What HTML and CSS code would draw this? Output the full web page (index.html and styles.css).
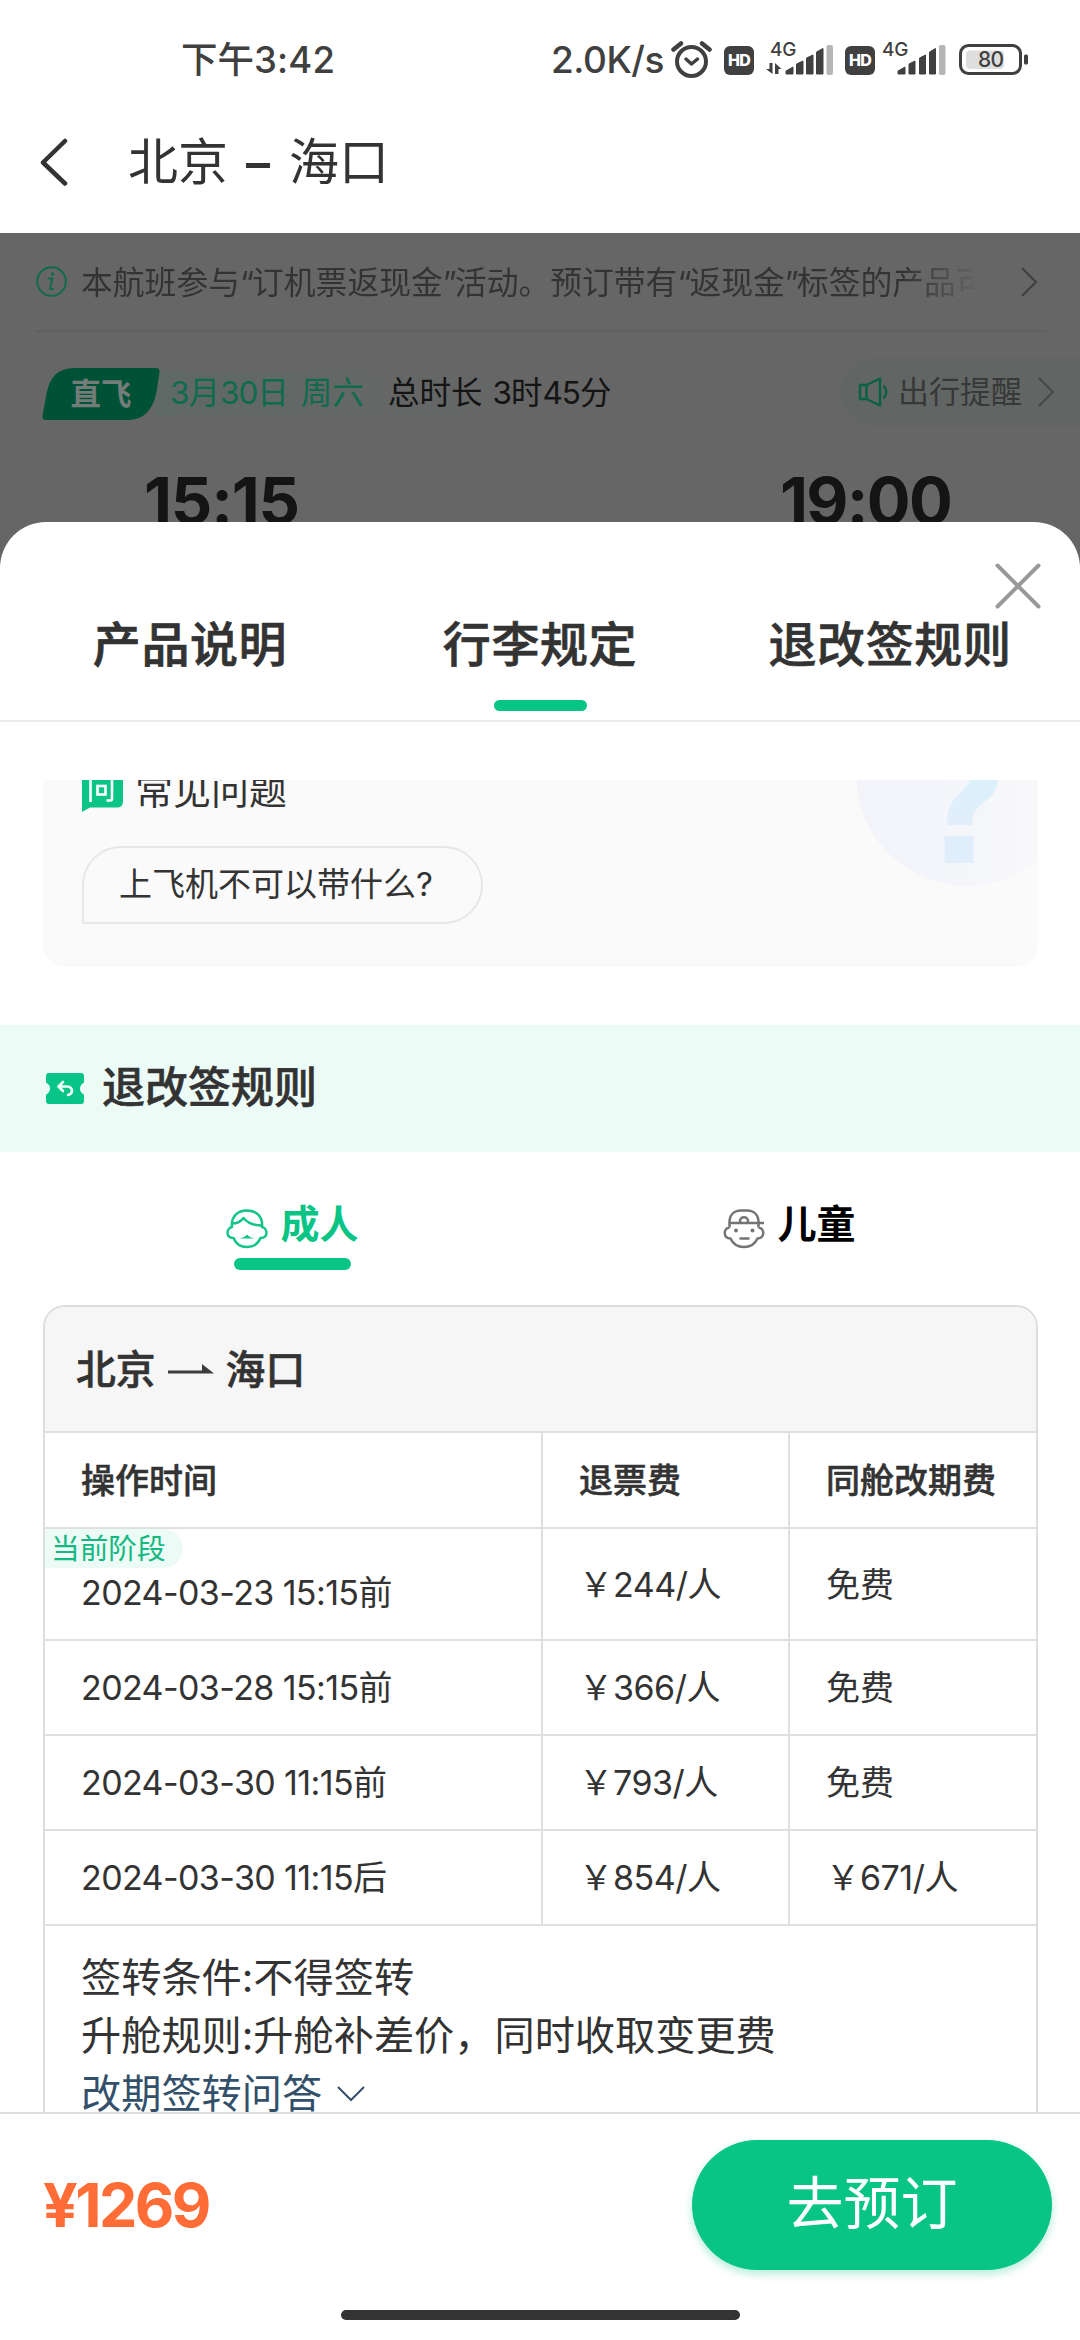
FILE: index.html
```html
<!DOCTYPE html>
<html lang="zh-CN">
<head>
<meta charset="utf-8">
<title>北京 - 海口</title>
<link rel="stylesheet" href="styles.css">
</head>
<body>
<div class="page">
  <header class="top">
    <div class="status">
      <span class="clock">下午<span class="clock-num">3:42</span></span>
      <div class="status-right">
        <span class="speed">2.0K/s</span>
        <svg class="alarm" width="41" height="38" viewBox="0 0 41 38" fill="none" stroke="#404040" stroke-linecap="round">
          <circle cx="20.500" cy="21.500" r="14.500" stroke-width="4"/>
          <path d="M2.500 9.500 10 3.500M38.500 9.500 31 3.500" stroke-width="4.500"/>
          <path d="M15 19l5.500 5 6-5" stroke-width="3.500" stroke-linejoin="round"/>
        </svg>
        <span class="hd hd-1">HD</span>
        <svg class="signal-1" width="68" height="40" viewBox="0 0 68 40">
          <text x="4" y="18" class="net">4G</text>
          <g fill="#404040">
            <path d="M0 31h3.500v-6h3v11zM9 36V25l6.500 6h-3v5z"/>
            <path d="M20 36v-3l7-4v7zM30.500 36V26l6.500-3v13zM40.500 36V20l6.500-3v19zM50.500 36V14l6.500-3.500V36z" stroke="#404040" stroke-width="1" stroke-linejoin="round"/>
          </g>
          <rect x="60.500" y="7" width="6.500" height="30" rx="2" fill="#b5b5b5"/>
        </svg>
        <span class="hd hd-2">HD</span>
        <svg class="signal-2" width="65" height="40" viewBox="0 0 65 40">
          <text x="0" y="18" class="net">4G</text>
          <path d="M16 36v-3l7-4v7zM27 36V26l6-3v13zM37.500 36V20l6-3v19zM47.500 36V14l6-3.500V36z" fill="#404040" stroke="#404040" stroke-linejoin="round"/>
          <rect x="57" y="7" width="6.500" height="30" rx="2" fill="#b5b5b5"/>
        </svg>
        <svg class="battery" width="70" height="31" viewBox="0 0 70 31">
          <rect x="1.500" y="1.500" width="60" height="28" rx="8" fill="none" stroke="#404040" stroke-width="3"/>
          <rect x="7" y="6.500" width="38" height="18.500" rx="4" fill="#dedede"/>
          <rect x="65" y="10.500" width="4" height="10" rx="1.500" fill="#404040"/>
          <text x="19" y="23" class="level">80</text>
        </svg>
      </div>
    </div>
    <nav class="nav">
      <svg class="back" width="28" height="48" viewBox="0 0 28 48" fill="none" stroke="#333" stroke-width="4.500" stroke-linecap="round" stroke-linejoin="round"><path d="M25 3 3 24.500 25 45.500"/></svg>
      <h1 class="title">北京<i class="dash"></i>海口</h1>
    </nav>
  </header>

  <section class="flight">
    <div class="notice">
      <svg width="31" height="31" viewBox="0 0 31 31"><circle cx="15.500" cy="15.500" r="14.300" fill="none" stroke="#0f6b4d" stroke-width="2"/><circle cx="16.500" cy="8" r="1.800" fill="#0f6b4d"/><path d="M12 12.500h4.500l-2.500 10.500h4" fill="none" stroke="#0f6b4d" stroke-width="2" stroke-linejoin="round"/></svg>
      <p class="notice-text">本航班参与<q>“</q>订机票返现金<q>”</q>活动。预订带有<q>“</q>返现金<q>”</q>标签的产品可</p>
      <svg class="more" width="17" height="30" viewBox="0 0 17 30" fill="none" stroke="#3f3f3f" stroke-width="2"><path d="M1 1l14 14L1 29"/></svg>
    </div>
    <div class="trip">
      <div class="direct">
        <svg class="direct-shape" width="118" height="52" viewBox="0 0 118 52"><path d="M32 0h82q4 0 3.500 4l-3 20Q109 52 86 52H4q-4 0-3.500-4l4-22Q9 0 32 0z" fill="#005236"/></svg>
        <span class="direct-text">直飞</span>
      </div>
      <div class="date"><span class="num-trip">3</span>月<span class="num-trip">30</span>日<span class="gap"></span>周六</div>
      <div class="duration">总时长<span class="gap-d"></span><span class="num-trip">3</span>时<span class="num-trip">45</span>分</div>
      <div class="remind">
        <svg width="31" height="30" viewBox="0 0 31 30" fill="none" stroke="#0a6043" stroke-width="2.400" stroke-linejoin="round" stroke-linecap="round"><path d="M2 8h6.500v14H2zM8.500 8 22 1.500v27L8.500 22M26 9.500q4.500 5.500 0 11"/></svg>
        <span>出行提醒</span>
        <svg width="17" height="30" viewBox="0 0 17 30" fill="none" stroke="#474747" stroke-width="2"><path d="M1 1l14 14L1 29"/></svg>
      </div>
    </div>
    <div class="times"><span class="depart">15:15</span><span class="arrive">19:00</span></div>
  </section>

  <main class="sheet">
    <div class="tabs">
      <div class="tab">产品说明</div>
      <div class="tab active">行李规定</div>
      <div class="tab">退改签规则</div>
      <svg class="close" width="46" height="46" viewBox="0 0 46 46" stroke="#999" stroke-width="4" stroke-linecap="round"><path d="M2.500 2.500l41 41M43.500 2.500l-41 41"/></svg>
    </div>

    <div class="content">
      <section class="faq">
        <svg class="faq-art" width="181" height="110" viewBox="0 0 181 110">
          <defs>
            <linearGradient id="disc" x1="0" x2="1" y1="0" y2="0"><stop offset="0" stop-color="#f3f4fa"/><stop offset=".55" stop-color="#f5f6fa"/><stop offset="1" stop-color="#fafafa"/></linearGradient>
            <linearGradient id="mark" x1="1" x2="0" y1="0" y2="1"><stop offset="0" stop-color="#daf1fb"/><stop offset="1" stop-color="#e3eefb"/></linearGradient>
          </defs>
          <circle cx="110" cy="-5" r="111" fill="url(#disc)"/>
          <path d="M113 0h28q-2 13-10 19c-10 8-16 12-16 26H90c0-18 5-24 12-31q8-7 11-14z" fill="url(#mark)"/>
          <rect x="87.500" y="56" width="29" height="27" fill="#e0eefb"/>
        </svg>
        <div class="faq-head">
          <svg class="faq-icon" width="41" height="46" viewBox="0 0 41 46">
            <path d="M6 0h29q6 0 6 6v29.500q0 6-6 6H8L0 46V6q0-6 6-6z" fill="#0dc487"/>
            <path d="M8.500 12v24M9 6l4 4M16 8h14v24.500q0 2-2 2h-3.500" fill="none" stroke="#fff" stroke-width="2.600"/>
            <rect x="15.500" y="20" width="8" height="8.500" fill="none" stroke="#fff" stroke-width="2.600"/>
          </svg>
          <h2>常见问题</h2>
        </div>
        <div class="bubble">上飞机不可以带什么?</div>
      </section>

      <section class="band">
        <svg width="38" height="31" viewBox="0 0 38 31">
          <path d="M3 0h32q3 0 3 3v6.500q-4 2-4 6t4 6V28q0 3-3 3H3q-3 0-3-3v-6.500q4-2 4-6t-4-6V3q0-3 3-3z" fill="#08c486"/>
          <path d="M17 9l-4.500 4.500L17 18M13 13.500h8q5 .500 5 4.500 0 3-4 4" fill="none" stroke="#edfff9" stroke-width="2.600" stroke-linecap="round" stroke-linejoin="round"/>
        </svg>
        <h2>退改签规则</h2>
      </section>

      <div class="ages">
        <div class="age adult">
          <svg width="42" height="40" viewBox="0 0 42 40" fill="none" stroke="#12c489" stroke-width="2.500" stroke-linejoin="round">
            <path d="M6 18C5 7 12 1.500 21 1.500S37 7 36 18c6 1.500 6.500 11-1.500 11C32 35 27 38 21 38S10 35 7.500 29C-.500 29 0 19.500 6 18z"/>
            <path d="M6 14.500c6 0 9-2 11.500-5.500 4 5 10 7.500 18.500 7.500"/>
            <path d="M13 29.500q5-.500 8-4 3 3.500 8 4z" fill="#12c489" stroke="none"/>
          </svg>
          <span>成人</span>
        </div>
        <div class="age child">
          <svg width="42" height="40" viewBox="0 0 42 40" fill="none" stroke="#747474" stroke-width="2.500" stroke-linejoin="round">
            <path d="M6.500 18.500C0 19.500 0 29 7.500 29.500 10 35 15 38 21 38s11-3 13.500-8.500C42 29 42 19.500 35.500 18.500M6.500 18.500V12C7 5 12 1.500 18 1.500h6C30 1.500 35 5 35.500 12v6.500M6 14h35M17 14v-2c0-5 8-5 8 0v2M16.500 29.500h10"/>
            <circle cx="13" cy="21.500" r="2" fill="#747474" stroke="none"/><circle cx="29.500" cy="21.500" r="2" fill="#747474" stroke="none"/>
          </svg>
          <span>儿童</span>
        </div>
      </div>

      <section class="rules">
        <div class="route">北京
          <svg width="46" height="11" viewBox="0 0 46 11"><path d="M0 6.500h34V0l12 9.500H0z" fill="#3c3c3c"/></svg>
          海口</div>
        <div class="row head"><div>操作时间</div><div>退票费</div><div>同舱改期费</div></div>
        <div class="row current">
          <div><em class="stage">当前阶段</em><span class="n">2024-03-23 15:15</span>前</div>
          <div>￥<span class="n">244/</span>人</div><div>免费</div>
        </div>
        <div class="row"><div><span class="n">2024-03-28 15:15</span>前</div><div>￥<span class="n">366/</span>人</div><div>免费</div></div>
        <div class="row"><div><span class="n">2024-03-30 11:15</span>前</div><div>￥<span class="n">793/</span>人</div><div>免费</div></div>
        <div class="row"><div><span class="n">2024-03-30 11:15</span>后</div><div>￥<span class="n">854/</span>人</div><div>￥<span class="n">671/</span>人</div></div>
        <div class="notes">
          <p>签转条件:不得签转</p>
          <p>升舱规则:升舱补差价，同时收取变更费</p>
          <p class="link">改期签转问答
            <svg width="30" height="18" viewBox="0 0 30 18" fill="none" stroke="#33506b" stroke-width="2"><path d="M2 2l13 13L28 2"/></svg></p>
        </div>
      </section>
    </div>
  </main>

  <footer class="bar">
    <div class="buy">
      <span class="price">¥1269</span>
      <div class="book">去预订</div>
    </div>
    <i class="home"></i>
  </footer>
</div>
</body>
</html>
```
FILE: styles.css
```css
* { box-sizing: border-box; margin: 0; padding: 0; }
body { background: #fff; font-family: Inter, "Noto Sans CJK SC", sans-serif; color: #333; }
i, em { font-style: normal; }
q { quotes: none; letter-spacing: -2px; }
svg { display: block; flex: none; }
.page { width: 1080px; height: 2340px; display: flex; flex-direction: column; overflow: hidden; }

/* status bar and navigation */
.top { height: 233px; flex: none; background: #fff; }
.status { height: 120px; display: flex; justify-content: space-between; align-items: center; padding: 0 52px 0 181px; color: #404040; }
.clock { font-size: 36.500px; line-height: 44px; font-weight: 500; white-space: nowrap; padding-bottom: 1px; }
.clock-num { letter-spacing: 0.200px; }
.status-right { display: flex; align-items: center; width: 477px; height: 40px; }
.speed { width: 120px; font-size: 37px; line-height: 44px; font-weight: 500; letter-spacing: -0.500px; white-space: nowrap; flex: none; padding-bottom: 1px; }
.alarm { margin-top: -3px; margin-left: 0; }
.hd { width: 30px; height: 29px; border-radius: 6px; background: #404040; color: #fff; font: 800 16px/29px Inter, sans-serif; text-align: center; flex: none; letter-spacing: -0.8px; }
.hd-1 { margin-left: 12px; }
.signal-1 { margin-left: 12px; margin-top: -4px; }
.hd-2 { margin-left: 11px; }
.signal-2 { margin-left: 7px; margin-top: -4px; }
.battery { margin-left: 12px; margin-top: -2px; }
.net { font: 500 19px Inter, sans-serif; fill: #404040; letter-spacing: -0.3px; }
.level { font: 500 21px Inter, sans-serif; fill: #404040; letter-spacing: -0.8px; }
.nav { height: 84px; display: flex; align-items: center; padding-left: 40px; }
.title { margin-left: 60px; font-size: 50px; line-height: 86px; font-weight: 400; display: flex; align-items: center; }
.dash { width: 24px; height: 5px; background: #333; margin: 7px 19px 0 18px; }

/* dimmed flight summary */
.flight { height: 340px; flex: none; background: #666; overflow: hidden; }
.notice { display: flex; align-items: center; height: 99px; margin: 0 34px 0 36px; border-bottom: 2px solid #606060; }
.notice-text { margin-left: 14px; width: 892px; padding-top: 2px; font-size: 31.800px; line-height: 60px; white-space: nowrap; overflow: hidden; color: transparent; background: linear-gradient(90deg, #333 92%, #666 101%); background-clip: text; -webkit-background-clip: text; }
.more { margin-left: 48px; }
.trip { height: 123px; display: flex; align-items: center; padding-left: 42px; font-size: 31.500px; line-height: 44px; white-space: nowrap; }
.direct { display: grid; width: 118px; height: 52px; place-items: center; flex: none; z-index: 1; }
.direct-shape, .direct-text { grid-area: 1 / 1; }
.direct-text { font-weight: 700; font-size: 30.500px; color: #727c78; }
.date { height: 46px; margin-left: -6px; padding-left: 16px; width: 230px; color: #0f6b4d; background: linear-gradient(90deg, #5f6965, #646766); }
.num-trip { letter-spacing: -1px; }
.gap { display: inline-block; width: 12px; }
.gap-d { display: inline-block; width: 10px; }
.duration { color: #141414; height: 46px; margin-left: 4px; width: 452px; background: linear-gradient(90deg, #646766, #666 30%); }
.remind { display: flex; align-items: center; flex: 1; height: 68px; margin-top: -3px; padding-left: 18px; border-radius: 34px 0 0 34px; background: #616664; color: #383838; font-size: 31px; }
.remind span { margin: 0 16px 0 9px; }
.times { display: flex; padding: 9px 0 0 144px; font-size: 65px; line-height: 74px; font-weight: 700; color: #141414; }
.depart { width: 636px; letter-spacing: -1.200px; }
.arrive { letter-spacing: -1.700px; }

/* bottom sheet */
.sheet { margin-top: -51px; flex: none; height: 1590px; background: #fff; border-radius: 46px 46px 0 0; overflow: hidden; z-index: 1; }
.tabs { position: relative; height: 200px; display: grid; grid-template-columns: repeat(3, 350px); padding: 86px 15px 0; border-bottom: 2px solid #eaeced; }
.tab { text-align: center; font-size: 48px; line-height: 74px; font-weight: 500; letter-spacing: 0.600px; -webkit-text-stroke: 0.700px #333; }
.tab.active::after { content: ""; display: block; width: 93px; height: 11px; margin: 18px auto 0; border-radius: 6px; background: #08c485; }
.close { position: absolute; left: 995px; top: 41px; }
.content { margin-top: 58px; height: 1332px; overflow: hidden; }

.faq { position: relative; height: 187px; margin: 0 42px 0 43px; padding-left: 39px; background: #fafafa; border-radius: 0 0 22px 22px; overflow: hidden; }
.faq-art { position: absolute; right: 0; top: 0; }
.faq-head { display: flex; align-items: center; height: 46px; margin-top: -14px; }
.faq-head h2 { margin-left: 12px; font-size: 38px; line-height: 46px; font-weight: 400; margin-top: 2px; }
.bubble { width: 401px; height: 78px; margin-top: 34px; padding-left: 35px; border: 2px solid #e7e7e7; border-radius: 39px 39px 39px 2px; font-size: 33px; line-height: 73px; white-space: nowrap; }

.band { height: 127px; margin-top: 58px; padding: 0 0 1px 46px; display: flex; align-items: center; background: #edfbf7; }
.band h2 { margin-left: 18px; font-size: 43px; line-height: 60px; font-weight: 500; margin-top: -2px; -webkit-text-stroke: 0.600px #333; }
.ages { display: grid; grid-template-columns: 497px 497px; padding-left: 44px; height: 153px; }
.age { display: grid; grid-template-columns: 42px auto; column-gap: 12px; justify-content: center; align-content: start; align-items: center; padding-top: 44px; font-size: 39px; line-height: 56px; font-weight: 700; color: #000; }
.age svg { margin-top: 10px; }
.adult { color: #08c485; }
.adult::after { content: ""; grid-column: 1 / 3; justify-self: center; width: 117px; height: 12px; border-radius: 6px; background: #08c485; margin-top: 6px; }

.rules { height: 900px; margin: 0 42px 0 43px; border: 2px solid #ddd; border-radius: 22px 22px 0 0; overflow: hidden; }
.route { height: 124px; display: flex; align-items: center; gap: 12px; padding: 0 0 5px 31px; background: #f6f6f6; font-size: 39.800px; font-weight: 500; -webkit-text-stroke: 0.600px #333; }
.route svg { margin-top: 5px; }
.row { display: grid; grid-template-columns: 496px 247px 1fr; height: 95px; border-top: 2px solid #dfdfdf; font-size: 34px; line-height: 94px; white-space: nowrap; }
.row > div { padding-left: 36px; border-left: 2px solid #dfdfdf; }
.row > div:first-child { border-left: 0; }
.head { font-weight: 500; height: 96px; line-height: 96px; -webkit-text-stroke: 0.500px #333; }
.current { height: 112px; line-height: 112px; }
.current > div:first-child { line-height: 50px; }
.n { letter-spacing: -0.600px; }
.row > div:not(:first-child) .n { letter-spacing: -0.500px; }
.stage { display: block; width: 138px; height: 39px; margin-left: -36px; padding-left: 6px; border-radius: 0 20px 20px 0; background: #edfbf6; color: #14b981; font-size: 28.700px; line-height: 40px; }
.notes { padding: 23px 36px 0; border-top: 2px solid #dfdfdf; font-size: 40.200px; line-height: 58px; white-space: nowrap; }
.link { display: flex; align-items: center; gap: 14px; color: #33506b; }

/* booking bar */
.bar { flex: 1; background: #fff; border-top: 2px solid #dedede; }
.buy { display: flex; justify-content: space-between; align-items: center; padding: 26px 28px 0 43px; }
.price { color: #ff6c36; font-size: 61px; font-weight: 700; letter-spacing: -2.600px; line-height: 80px; }
.book { width: 360px; height: 130px; border-radius: 65px; background: #08c485; color: #fff; font-size: 57px; line-height: 128px; text-align: center; box-shadow: 0 4px 8px rgba(8,196,133,.3); }
.home { display: block; width: 399px; height: 10px; margin: 40px auto 0; border-radius: 5px; background: #333; }
```
